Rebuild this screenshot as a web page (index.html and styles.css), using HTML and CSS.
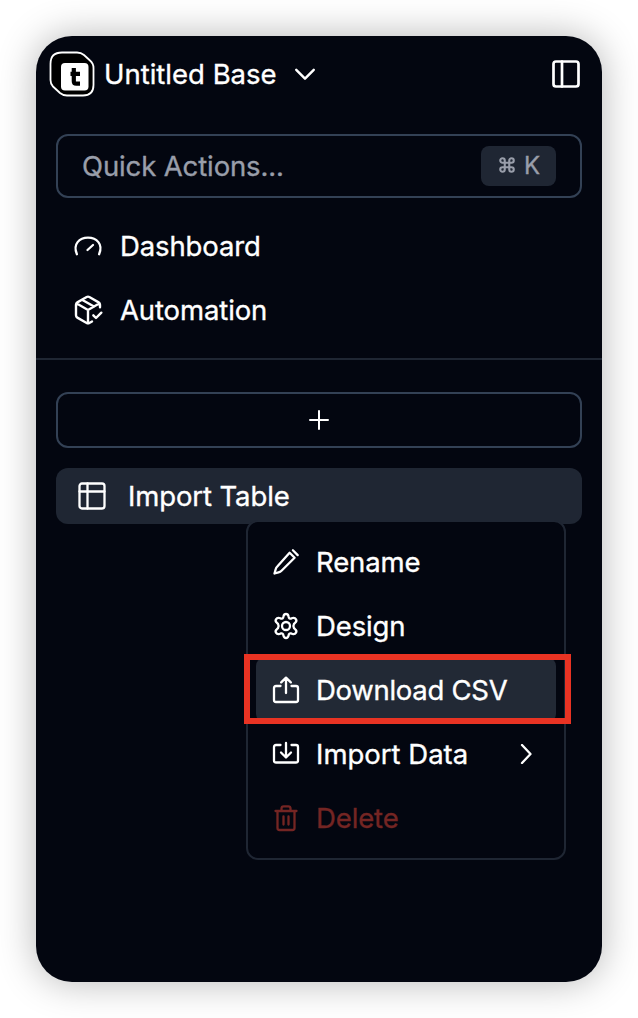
FILE: index.html
```
<!DOCTYPE html>
<html lang="en">
<head>
<meta charset="utf-8">
<title>Untitled Base</title>
<link rel="stylesheet" href="styles.css">
</head>
<body>
<aside class="panel">
  <header class="header">
    <svg class="logo" viewBox="0 0 46 46">
      <path class="logo-body" d="M13 1.500H28Q32 1.500 35 4L41 9.500Q44.500 12.500 44.500 17V34Q44.500 44.500 34 44.500H18Q14 44.500 11 42L4 35.500Q1.500 33 1.500 29V13Q1.500 1.500 13 1.500Z"/>
      <rect class="logo-tile" x="12" y="12" width="27.500" height="27.500" rx="4"/>
      <path class="logo-mark" d="M24.800 17V30.200Q24.800 32.700 27.300 32.700H31M21.500 22.800H31"/>
    </svg>
    <h1 class="title">Untitled Base</h1>
    <svg class="chevron icon" viewBox="0 0 24 24"><path d="m4.500 8.500 7.500 7.500 7.500-7.500"/></svg>
    <svg class="toggle icon" viewBox="0 0 28 28"><rect x="1.500" y="1.500" width="25" height="25" rx="2.500"/><path d="M10 1.500v25"/></svg>
  </header>

  <div class="search">
    <span class="search-label">Quick Actions...</span>
    <kbd class="shortcut">
      <svg class="command icon" viewBox="0 0 24 24"><path d="M9 9H6a3 3 0 1 1 3-3v12a3 3 0 1 1-3-3h12a3 3 0 1 1-3 3V6a3 3 0 1 1 3 3H9"/></svg>
      <span>K</span>
    </kbd>
  </div>

  <nav class="nav">
    <a class="nav-item">
      <svg class="nav-icon icon" viewBox="0 0 32 32"><path d="m15.500 20 5.500-5M4.900 24.200C.5 14 7.500 7.700 16 7.700S31.500 14 27.100 24.200"/></svg>
      <span class="t-dashboard">Dashboard</span>
    </a>
    <a class="nav-item">
      <svg class="nav-icon package icon" viewBox="0 0 24 24"><path d="m16 16 2 2 4-4M21 10V8a2 2 0 0 0-1-1.730l-7-4a2 2 0 0 0-2 0l-7 4A2 2 0 0 0 3 8v8a2 2 0 0 0 1 1.730l7 4a2 2 0 0 0 2 0l2-1.140M7.500 4.270l9 5.150M3.290 7 12 12l8.710-5M12 22V12"/></svg>
      <span class="t-automation">Automation</span>
    </a>
  </nav>

  <section class="tables">
    <button class="add"><svg class="plus icon" viewBox="0 0 20 20"><path d="M10 1v18M1 10h18"/></svg></button>
    <div class="table-item">
      <svg class="table-icon icon" viewBox="0 0 28 28"><rect x="1.500" y="1.500" width="25" height="25" rx="2.500"/><path d="M1.500 9.500h25M9.500 1.500v25"/></svg>
      <span class="t-table">Import Table</span>

      <div class="menu">
        <div class="menu-item">
          <svg class="menu-icon icon" viewBox="0 0 28 28"><path d="m17.600 4.800 5 5L9.500 22.700q-1.200 1.200-3 1.700l-4 1.100 1.100-4q.5-1.800 1.700-3ZM20.900 2.300l4.800 4.800"/></svg>
          <span class="t-rename">Rename</span>
        </div>
        <div class="menu-item">
          <svg class="menu-icon icon" viewBox="0 0 28 28"><path d="M11.500 4.200Q12 2 14 2t2.500 2.200l.4 1.500q.6 1.300 2 .9l1.600-.6q2.400-.6 3.500 1.300t-.8 3.400l-1.200 1.200q-1.200 2.100 0 4.200l1.200 1.200q1.900 1.500.8 3.400T20.500 22l-1.600-.6q-1.400-.4-2 .9l-.4 1.500Q16 26 14 26t-2.500-2.200l-.4-1.500q-.6-1.300-2-.9L7.500 22q-2.400.6-3.500-1.300t.8-3.400L6 16.100q1.200-2.100 0-4.200l-1.200-1.200Q2.900 9.200 4 7.300T7.500 6l1.600.6q1.400.4 2-.9Z"/><circle cx="14" cy="14" r="4"/></svg>
          <span class="t-design">Design</span>
        </div>
        <div class="menu-item active">
          <svg class="menu-icon icon" viewBox="0 0 28 28"><path d="M8.500 10H4Q2 10 2 12V24q0 2 2 2h20q2 0 2-2V12q0-2-2-2h-4.500M14 17V1.800M9.200 6.400 14 1.600 18.800 6.400"/></svg>
          <span class="t-download">Download CSV</span>
          <span class="marker"></span>
        </div>
        <div class="menu-item">
          <svg class="menu-icon icon" viewBox="0 0 28 28"><path d="M8.500 5H4Q2 5 2 7V20.500q0 2 2 2h20q2 0 2-2V7q0-2-2-2h-4.500M14 3v14.500M9 12.500l5 5 5-5"/></svg>
          <span class="t-data">Import Data</span>
          <svg class="submenu icon" viewBox="0 0 12 20"><path d="m2 1 8.500 9L2 19"/></svg>
        </div>
        <div class="menu-item danger">
          <svg class="menu-icon icon" viewBox="0 0 28 28"><path d="M3.500 7h21M5.500 7V24q0 2 2 2h13q2 0 2-2V7M9.500 7V4.500q0-2.200 2.200-2.200h4.600q2.200 0 2.200 2.200V7M11.500 12.500v8M16.500 12.500v8"/></svg>
          <span class="t-delete">Delete</span>
        </div>
      </div>
    </div>
  </section>
</aside>
</body>
</html>
```
FILE: styles.css
```
* { box-sizing: border-box; }
body {
  margin: 0;
  padding: 36px;
  width: 638px;
  height: 1018px;
  background: #fff;
  font-family: Inter, "Liberation Sans", sans-serif;
  font-size: 27.5px;
  font-weight: 400;
  line-height: 36px;
  letter-spacing: -.12px;
  color: #fff;
  -webkit-text-stroke: .35px currentColor;
  overflow: hidden;
}
.panel {
  width: 566px;
  height: 946px;
  border-radius: 36px;
  background: #030610;
  box-shadow: 0 0 38px rgba(0, 0, 0, .29);
}
.icon {
  display: block;
  flex: none;
  fill: none;
  stroke: currentColor;
  stroke-width: 2.300;
  stroke-linecap: round;
  stroke-linejoin: round;
}
.header {
  display: flex;
  align-items: center;
  height: 76px;
  padding: 0 22px 0 13px;
}
.logo { width: 46px; height: 46px; flex: none; }
.logo-body { fill: #000; stroke: #fff; stroke-width: 1.800px; }
.logo-tile { fill: #fff; }
.logo-mark { fill: none; stroke: #000; stroke-width: 4.200px; stroke-linejoin: round; }
.title { margin: 0 0 0 9px; font-size: inherit; font-weight: inherit; letter-spacing: 0; width: 177px; white-space: nowrap; }
.chevron { width: 28px; height: 28px; margin-left: 10px; stroke-width: 2.100; }
.toggle { width: 28px; height: 28px; margin-left: auto; stroke-width: 2.700; }
.search {
  display: flex;
  align-items: center;
  justify-content: space-between;
  height: 64px;
  margin: 22px 20px 0;
  padding: 0 24px;
  border: 2px solid #334155;
  border-radius: 12px;
  color: #999eaa;
}
.shortcut {
  display: flex;
  align-items: center;
  gap: 8px;
  width: 75px;
  height: 40px;
  padding-left: 17px;
  border-radius: 8px;
  background: #1f2633;
  font: 400 24px/40px Inter, sans-serif;
}
.command { width: 18px; height: 18px; margin-top: -3px; stroke-width: 2.800; }
.nav { padding: 16px 20px; border-bottom: 2px solid #1f2633; }
.nav-item { display: flex; align-items: center; gap: 16px; height: 64px; padding-left: 16px; }
.nav-icon { width: 32px; height: 32px; }
.package { stroke-width: 1.800; }
.tables { padding: 32px 20px 0; }
.add {
  display: flex;
  align-items: center;
  justify-content: center;
  width: 100%;
  height: 56px;
  padding: 0;
  border: 2px solid #334155;
  border-radius: 12px;
  background: transparent;
  color: #fff;
}
.plus { width: 20px; height: 20px; stroke-width: 2; }
.table-item {
  position: relative;
  display: flex;
  align-items: center;
  gap: 22px;
  height: 56px;
  margin-top: 20px;
  padding-left: 22px;
  border-radius: 12px;
  background: #1f2633;
}
.table-icon { width: 28px; height: 28px; }
.t-data { letter-spacing: 0; }
.t-download { letter-spacing: -.28px; }
.menu {
  position: absolute;
  left: 190px;
  top: 52px;
  width: 320px;
  height: 340px;
  padding: 8px;
  border: 2px solid #1f2633;
  border-radius: 12px;
  background: #030610;
}
.menu-item {
  position: relative;
  display: flex;
  align-items: center;
  gap: 16px;
  height: 64px;
  padding: 0 24px 0 16px;
  border-radius: 8px;
  white-space: nowrap;
}
.menu-icon { width: 28px; height: 28px; }
.active { background: #222935; }
.marker {
  position: absolute;
  left: -12px;
  top: -4px;
  width: 327px;
  height: 70px;
  border: 6px solid #e93323;
}
.submenu { width: 12px; height: 20px; margin-left: auto; }
.danger { color: #742523; }
```
